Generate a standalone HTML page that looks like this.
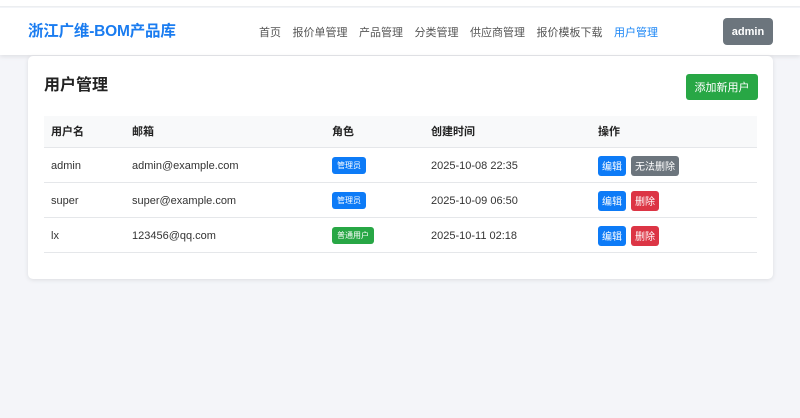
<!DOCTYPE html>
<html><head><meta charset="utf-8"><style>
*{box-sizing:border-box;margin:0;padding:0}
body{width:800px;height:418px;background:#f4f5f9;font-family:"Liberation Sans","Noto Sans CJK SC",sans-serif;color:#333;position:relative;overflow:hidden}
.top{position:absolute;left:0;top:0;width:800px;height:7px;background:#fff;border-bottom:1px solid #eceef1}
.nav{position:absolute;left:0;top:8px;width:800px;height:47px;background:#fff;box-shadow:0 2px 4px rgba(0,0,0,.08)}
.brand{position:absolute;left:28px;top:14px;font-size:15.5px;font-weight:bold;color:#1a7cf0;line-height:20px;letter-spacing:-0.2px}
.links{position:absolute;left:259px;top:17px;font-size:11px;color:#555;line-height:16px;white-space:nowrap}
.links span{margin-right:11.5px}
.links .act{color:#1a85f5}
.admin{position:absolute;left:723px;top:10px;width:50px;height:27px;background:#6c757d;border-radius:4px;color:#fff;font-size:11px;font-weight:bold;display:flex;align-items:center;justify-content:center}
.card{position:absolute;left:28px;top:56px;width:745px;height:223px;background:#fff;border-radius:5px;box-shadow:0 1px 5px rgba(0,0,0,.1)}
h2{position:absolute;left:16px;top:15px;font-size:16px;font-weight:bold;color:#222}
.add{position:absolute;left:658px;top:18px;width:72px;height:26px;background:#28a745;border-radius:3px;color:#fff;font-size:11px;display:flex;align-items:center;justify-content:center}
table{position:absolute;left:16px;top:60px;width:713px;border-collapse:collapse;font-size:11px}
th{background:#f8f9fa;height:31px;text-align:left;font-weight:bold;color:#222;padding-left:7px;border-bottom:1px solid #e5e7ea}
td{height:35px;padding-left:7px;border-bottom:1px solid #e5e7ea;color:#333;vertical-align:middle;padding-top:2px}
.b{display:inline-flex;align-items:center;color:#fff;font-size:8px;border-radius:3px;height:17px;padding:0 5px;vertical-align:middle}
.btn{display:inline-flex;align-items:center;justify-content:center;color:#fff;font-size:10px;border-radius:3px;height:20px;padding:0 4px;margin-right:5px;vertical-align:middle}
</style></head><body>
<div class="top"></div>
<div class="nav">
<div class="brand">浙江广维-BOM产品库</div>
<div class="links"><span>首页</span><span>报价单管理</span><span>产品管理</span><span>分类管理</span><span>供应商管理</span><span>报价模板下载</span><span class="act">用户管理</span></div>
<div class="admin">admin</div>
</div>
<div class="card">
<h2>用户管理</h2>
<div class="add">添加新用户</div>
<table>
<tr><th style="width:81px">用户名</th><th style="width:200px">邮箱</th><th style="width:99px">角色</th><th style="width:167px">创建时间</th><th>操作</th></tr>
<tr><td>admin</td><td>admin@example.com</td><td><span class="b" style="background:#0d7bf7">管理员</span></td><td>2025-10-08 22:35</td><td><span class="btn" style="background:#0d7bf7">编辑</span><span class="btn" style="background:#6c757d">无法删除</span></td></tr>
<tr><td>super</td><td>super@example.com</td><td><span class="b" style="background:#0d7bf7">管理员</span></td><td>2025-10-09 06:50</td><td><span class="btn" style="background:#0d7bf7">编辑</span><span class="btn" style="background:#dc3545">删除</span></td></tr>
<tr><td>lx</td><td>123456@qq.com</td><td><span class="b" style="background:#28a745">普通用户</span></td><td>2025-10-11 02:18</td><td><span class="btn" style="background:#0d7bf7">编辑</span><span class="btn" style="background:#dc3545">删除</span></td></tr>
</table>
</div>
</body></html>
